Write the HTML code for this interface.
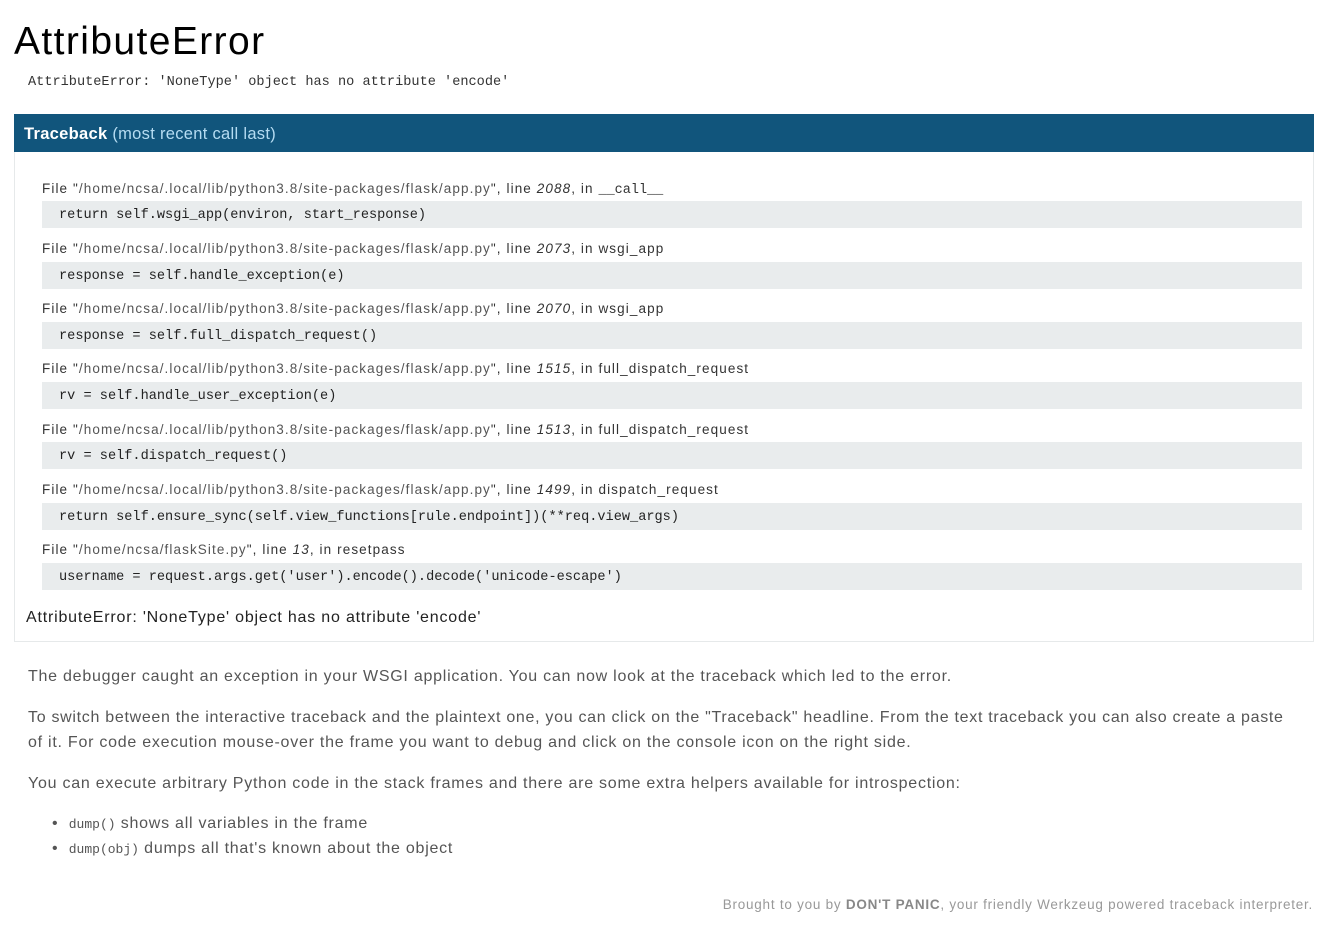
<!DOCTYPE html>
<html><head><meta charset="utf-8"><style>
body{margin:0;background:#fff;width:1330px;height:934px;position:relative;font-family:"Liberation Sans",sans-serif;overflow:hidden}
.a{position:absolute;white-space:nowrap}
h1{position:absolute;left:14px;top:20px;margin:0;font-weight:normal;font-size:39px;color:#000;letter-spacing:1.4px}
.mono{font-family:"Liberation Mono",monospace}
.hdr{left:28px;top:75px;font-size:13.6px;color:#333}
.box{position:absolute;left:14px;top:114px;width:1298px;height:526px;border:1px solid #e6e9ea}
.bar{position:absolute;left:14px;top:114px;width:1300px;height:38px;background:#11557c;color:#fff;font-size:16.5px;line-height:40px;letter-spacing:0.3px}
.bar b{margin-left:10px}
.bar span{color:#b5dcf2}
.file{left:42px;font-size:13.5px;color:#333;letter-spacing:1.1px}
.file .p{color:#555}
.code{position:absolute;left:42px;width:1260px;height:27px;background:#e9eced;font-size:13.6px;line-height:29px;color:#222}
.code span{margin-left:17px}
.t{color:#555;font-size:16px;letter-spacing:0.75px;left:28px}
</style></head><body>
<h1>AttributeError</h1>
<div class="a mono hdr">AttributeError: 'NoneType' object has no attribute 'encode'</div>
<div class="box"></div>
<div class="bar"><b>Traceback</b> <span>(most recent call last)</span></div>

<div class="a file" style="top:181px">File "<span class="p">/home/ncsa/.local/lib/python3.8/site-packages/flask/app.py</span>", line <i>2088</i>, in <span class="mono" style="letter-spacing:0">__call__</span></div>
<div class="code mono" style="top:201px"><span>return self.wsgi_app(environ, start_response)</span></div>
<div class="a file" style="top:241px">File "<span class="p">/home/ncsa/.local/lib/python3.8/site-packages/flask/app.py</span>", line <i>2073</i>, in wsgi_app</div>
<div class="code mono" style="top:262px"><span>response = self.handle_exception(e)</span></div>
<div class="a file" style="top:301px">File "<span class="p">/home/ncsa/.local/lib/python3.8/site-packages/flask/app.py</span>", line <i>2070</i>, in wsgi_app</div>
<div class="code mono" style="top:322px"><span>response = self.full_dispatch_request()</span></div>
<div class="a file" style="top:361px">File "<span class="p">/home/ncsa/.local/lib/python3.8/site-packages/flask/app.py</span>", line <i>1515</i>, in full_dispatch_request</div>
<div class="code mono" style="top:382px"><span>rv = self.handle_user_exception(e)</span></div>
<div class="a file" style="top:422px">File "<span class="p">/home/ncsa/.local/lib/python3.8/site-packages/flask/app.py</span>", line <i>1513</i>, in full_dispatch_request</div>
<div class="code mono" style="top:442px"><span>rv = self.dispatch_request()</span></div>
<div class="a file" style="top:482px">File "<span class="p">/home/ncsa/.local/lib/python3.8/site-packages/flask/app.py</span>", line <i>1499</i>, in dispatch_request</div>
<div class="code mono" style="top:503px"><span>return self.ensure_sync(self.view_functions[rule.endpoint])(**req.view_args)</span></div>
<div class="a file" style="top:542px">File "<span class="p">/home/ncsa/flaskSite.py</span>", line <i>13</i>, in resetpass</div>
<div class="code mono" style="top:563px"><span>username = request.args.get('user').encode().decode('unicode-escape')</span></div>
<div class="a" style="left:26px;top:609px;font-size:16px;color:#222;letter-spacing:0.8px">AttributeError: 'NoneType' object has no attribute 'encode'</div>

<div class="a t" style="top:668px">The debugger caught an exception in your WSGI application. You can now look at the traceback which led to the error.</div>
<div class="a t" style="top:709px;letter-spacing:0.7px">To switch between the interactive traceback and the plaintext one, you can click on the "Traceback" headline. From the text traceback you can also create a paste</div>
<div class="a t" style="top:734px">of it. For code execution mouse-over the frame you want to debug and click on the console icon on the right side.</div>
<div class="a t" style="top:775px">You can execute arbitrary Python code in the stack frames and there are some extra helpers available for introspection:</div>
<div class="a t" style="top:815px;left:52px">•&nbsp; <span class="mono" style="font-size:13px;letter-spacing:0">dump()</span> shows all variables in the frame</div>
<div class="a t" style="top:840px;left:52px">•&nbsp; <span class="mono" style="font-size:13px;letter-spacing:0">dump(obj)</span> dumps all that's known about the object</div>

<div class="a" style="right:17px;top:897px;font-size:13.5px;color:#999;letter-spacing:0.75px">Brought to you by <b style="color:#888">DON'T PANIC</b>, your friendly Werkzeug powered traceback interpreter.</div>
</body></html>
